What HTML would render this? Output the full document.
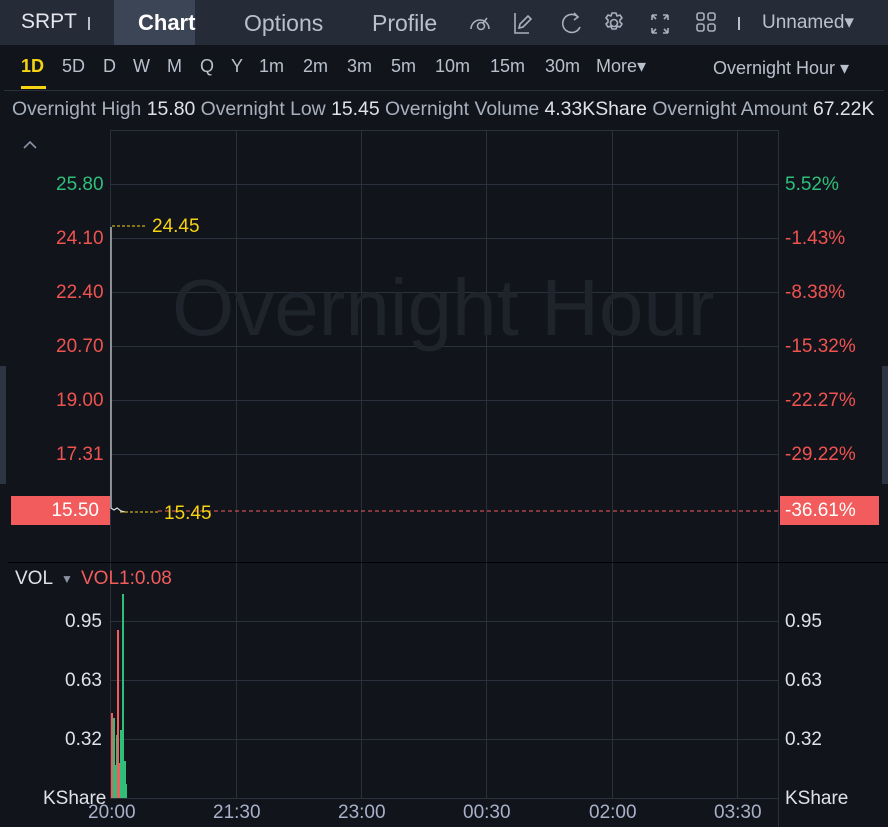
<!DOCTYPE html>
<html><head><meta charset="utf-8"><style>
*{margin:0;padding:0;box-sizing:border-box}
body{width:888px;height:827px;background:#11141b;font-family:"Liberation Sans",sans-serif;position:relative;overflow:hidden;color:#c3c8d3}
.a{position:absolute;white-space:nowrap}
#top{position:absolute;left:0;top:0;width:888px;height:45px;background:#262b38}
.t{font-size:22px;color:#b9c0cc;top:10px}
.p{font-size:18px;color:#b9c0cc;top:56px}
.ax{font-size:19px}
.g{position:absolute;background:#2a303c}
</style></head><body>
<div id="top"></div>
<div class="a" style="left:114px;top:0;width:81px;height:45px;background:#3b4556"></div>
<div class="a t" style="left:21px;color:#e3e6ec;font-size:21px">SRPT</div>
<div class="a" style="left:88px;top:17px;width:2px;height:13px;background:#b9c0cc"></div>
<div class="a t" style="left:138px;color:#fff;font-weight:bold">Chart</div>
<div class="a t" style="left:244px;font-size:23px">Options</div>
<div class="a t" style="left:372px;font-size:23px">Profile</div>
<svg class="a" style="left:464px;top:8px" width="280" height="30" fill="none" stroke="#a9b0bd" stroke-width="1.6">
<path d="M7 21 A9 9 0 1 1 25 21"/><circle cx="17" cy="18" r="3.5"/><path d="M19 15 L23 10"/>
<path d="M51 5 V25 H65"/><path d="M55 20 L56 16 L64 8 L67 11 L59 19 Z"/>
<path d="M114 9 A9 9 0 1 0 116 19"/><path d="M110 5 L114 9 L110 12"/>
<path d="M148 5 h4 l1 3 l3 -1 l2 3 l-2 2 v2 l2 2 l-2 3 l-3 -1 l-1 3 h-4 l-1 -3 l-3 1 l-2 -3 l2 -2 v-2 l-2 -2 l2 -3 l3 1 z" stroke-linejoin="round"/><circle cx="150" cy="15" r="3.5"/>
<path d="M188 7 h5 M188 7 v5 M188 7 l4 4 M204 7 h-5 M204 7 v5 M204 7 l-4 4 M188 25 h5 M188 25 v-5 M188 25 l4 -4 M204 25 h-5 M204 25 v-5 M204 25 l-4 -4"/>
<rect x="233" y="5" width="7" height="7" rx="2"/><rect x="244" y="5" width="7" height="7" rx="2"/><rect x="233" y="16" width="7" height="7" rx="2"/><rect x="244" y="16" width="7" height="7" rx="2"/>
</svg>
<div class="a" style="left:738px;top:17px;width:2px;height:13px;background:#b9c0cc"></div>
<div class="a" style="left:762px;top:11px;font-size:19px;color:#b9c0cc">Unnamed▾</div>
<div class="a p" style="left:21px;color:#f5d311;font-weight:bold">1D</div>
<div class="a" style="left:21px;top:86px;width:25px;height:3px;background:#f5d311"></div>
<div class="a p" style="left:62px">5D</div><div class="a p" style="left:103px">D</div><div class="a p" style="left:133px">W</div><div class="a p" style="left:167px">M</div><div class="a p" style="left:200px">Q</div><div class="a p" style="left:231px">Y</div><div class="a p" style="left:259px">1m</div><div class="a p" style="left:303px">2m</div><div class="a p" style="left:347px">3m</div><div class="a p" style="left:391px">5m</div><div class="a p" style="left:435px">10m</div><div class="a p" style="left:490px">15m</div><div class="a p" style="left:545px">30m</div><div class="a p" style="left:596px">More▾</div>
<div class="a p" style="left:713px;top:58px">Overnight Hour ▾</div>
<div class="a" style="left:4px;top:90px;width:880px;height:1px;background:#2a303c"></div>
<div class="a" style="left:12px;top:98px;font-size:19.4px;color:#a9b0bd">Overnight High <span style="color:#dfe2e8">15.80</span> Overnight Low <span style="color:#dfe2e8">15.45</span> Overnight Volume <span style="color:#dfe2e8">4.33KShare</span> Overnight Amount <span style="color:#dfe2e8">67.22K</span></div>
<svg class="a" style="left:22px;top:140px" width="16" height="10"><path d="M2 8 L8 2 L14 8" stroke="#8b92a3" stroke-width="1.6" fill="none"/></svg>
<!-- grid -->
<div class="g" style="left:110px;top:130px;width:668px;height:1px"></div>
<div class="g" style="left:110px;top:130px;width:1px;height:668px"></div>
<div class="g" style="left:236px;top:130px;width:1px;height:668px"></div>
<div class="g" style="left:361px;top:130px;width:1px;height:668px"></div>
<div class="g" style="left:486px;top:130px;width:1px;height:668px"></div>
<div class="g" style="left:612px;top:130px;width:1px;height:668px"></div>
<div class="g" style="left:737px;top:130px;width:1px;height:668px"></div>
<div class="g" style="left:778px;top:130px;width:1px;height:697px"></div>
<div class="g" style="left:110px;top:184px;width:668px;height:1px"></div>
<div class="g" style="left:110px;top:238px;width:668px;height:1px"></div>
<div class="g" style="left:110px;top:292px;width:668px;height:1px"></div>
<div class="g" style="left:110px;top:346px;width:668px;height:1px"></div>
<div class="g" style="left:110px;top:400px;width:668px;height:1px"></div>
<div class="g" style="left:110px;top:454px;width:668px;height:1px"></div>
<div class="g" style="left:110px;top:621px;width:668px;height:1px"></div>
<div class="g" style="left:110px;top:680px;width:668px;height:1px"></div>
<div class="g" style="left:110px;top:739px;width:668px;height:1px"></div>
<div class="g" style="left:110px;top:798px;width:668px;height:1px"></div>
<div class="a" style="left:8px;top:562px;width:880px;height:1px;background:#000"></div>
<div class="a" style="left:172px;top:262px;font-size:80px;color:#1f232b">Overnight Hour</div>
<!-- left axis -->
<div class="a ax" style="left:56px;top:174px;color:#2fbf7a">25.80</div>
<div class="a ax" style="left:56px;top:228px;color:#ef5350">24.10</div>
<div class="a ax" style="left:56px;top:282px;color:#ef5350">22.40</div>
<div class="a ax" style="left:56px;top:336px;color:#ef5350">20.70</div>
<div class="a ax" style="left:56px;top:390px;color:#ef5350">19.00</div>
<div class="a ax" style="left:56px;top:444px;color:#ef5350">17.31</div>
<div class="a ax" style="left:11px;top:496px;width:99px;height:29px;background:#f25c5c;color:#fff;text-align:right;padding:4px 11px 0 0">15.50</div>
<div class="a ax" style="left:785px;top:174px;color:#2fbf7a">5.52%</div>
<div class="a ax" style="left:785px;top:228px;color:#ef5350">-1.43%</div>
<div class="a ax" style="left:785px;top:282px;color:#ef5350">-8.38%</div>
<div class="a ax" style="left:785px;top:336px;color:#ef5350">-15.32%</div>
<div class="a ax" style="left:785px;top:390px;color:#ef5350">-22.27%</div>
<div class="a ax" style="left:785px;top:444px;color:#ef5350">-29.22%</div>
<div class="a ax" style="left:780px;top:496px;width:99px;height:29px;background:#f25c5c;color:#fff;padding:4px 0 0 5px">-36.61%</div>
<div class="a" style="left:0;top:366px;width:6px;height:118px;background:#2e3542"></div>
<div class="a" style="left:882px;top:366px;width:6px;height:118px;background:#2e3542"></div>
<svg class="a" style="left:0;top:0" width="888" height="827">
<line x1="112" y1="226" x2="146" y2="226" stroke="#f5d311" stroke-dasharray="3,2"/>
<line x1="120" y1="512" x2="158" y2="512" stroke="#f5d311" stroke-dasharray="3,2"/>
<line x1="158" y1="511" x2="778" y2="511" stroke="#f25c5c" stroke-dasharray="4,3"/>
<path d="M111 227 V508 L114 510 L117 508 L121 511 L125 512" stroke="#d8dbe0" fill="none" stroke-width="1.2"/>
<rect x="111" y="713" width="2" height="85" fill="#f25c5c"/>
<rect x="113" y="718" width="2" height="80" fill="#2fbf7a"/>
<rect x="115" y="765" width="2" height="33" fill="#2fbf7a"/>
<rect x="116" y="735" width="2" height="63" fill="#2fbf7a"/>
<rect x="117" y="630" width="2" height="168" fill="#f25c5c"/>
<rect x="119" y="763" width="2" height="35" fill="#f25c5c"/>
<rect x="120" y="730" width="2" height="68" fill="#2fbf7a"/>
<rect x="122" y="594" width="2" height="204" fill="#2fbf7a"/>
<rect x="124" y="761" width="2" height="37" fill="#2fbf7a"/>
<rect x="126" y="784" width="1" height="14" fill="#2fbf7a"/>
</svg>
<div class="a ax" style="left:152px;top:216px;color:#f5d311">24.45</div>
<div class="a ax" style="left:164px;top:503px;color:#f5d311">15.45</div>
<div class="a ax" style="left:15px;top:568px;color:#dfe2e8">VOL</div>
<div class="a" style="left:61px;top:572px;font-size:12px;color:#8b92a3">▼</div>
<div class="a ax" style="left:81px;top:568px;color:#f25c5c">VOL1:0.08</div>
<div class="a ax" style="left:65px;top:611px;color:#dfe2e8">0.95</div>
<div class="a ax" style="left:65px;top:670px;color:#dfe2e8">0.63</div>
<div class="a ax" style="left:65px;top:729px;color:#dfe2e8">0.32</div>
<div class="a ax" style="left:43px;top:788px;color:#dfe2e8">KShare</div>
<div class="a ax" style="left:785px;top:611px;color:#dfe2e8">0.95</div>
<div class="a ax" style="left:785px;top:670px;color:#dfe2e8">0.63</div>
<div class="a ax" style="left:785px;top:729px;color:#dfe2e8">0.32</div>
<div class="a ax" style="left:785px;top:788px;color:#dfe2e8">KShare</div>
<div class="a ax" style="left:88px;top:802px;color:#a9b0c8">20:00</div>
<div class="a ax" style="left:213px;top:802px;color:#a9b0c8">21:30</div>
<div class="a ax" style="left:338px;top:802px;color:#a9b0c8">23:00</div>
<div class="a ax" style="left:463px;top:802px;color:#a9b0c8">00:30</div>
<div class="a ax" style="left:589px;top:802px;color:#a9b0c8">02:00</div>
<div class="a ax" style="left:714px;top:802px;color:#a9b0c8">03:30</div>
</body></html>
